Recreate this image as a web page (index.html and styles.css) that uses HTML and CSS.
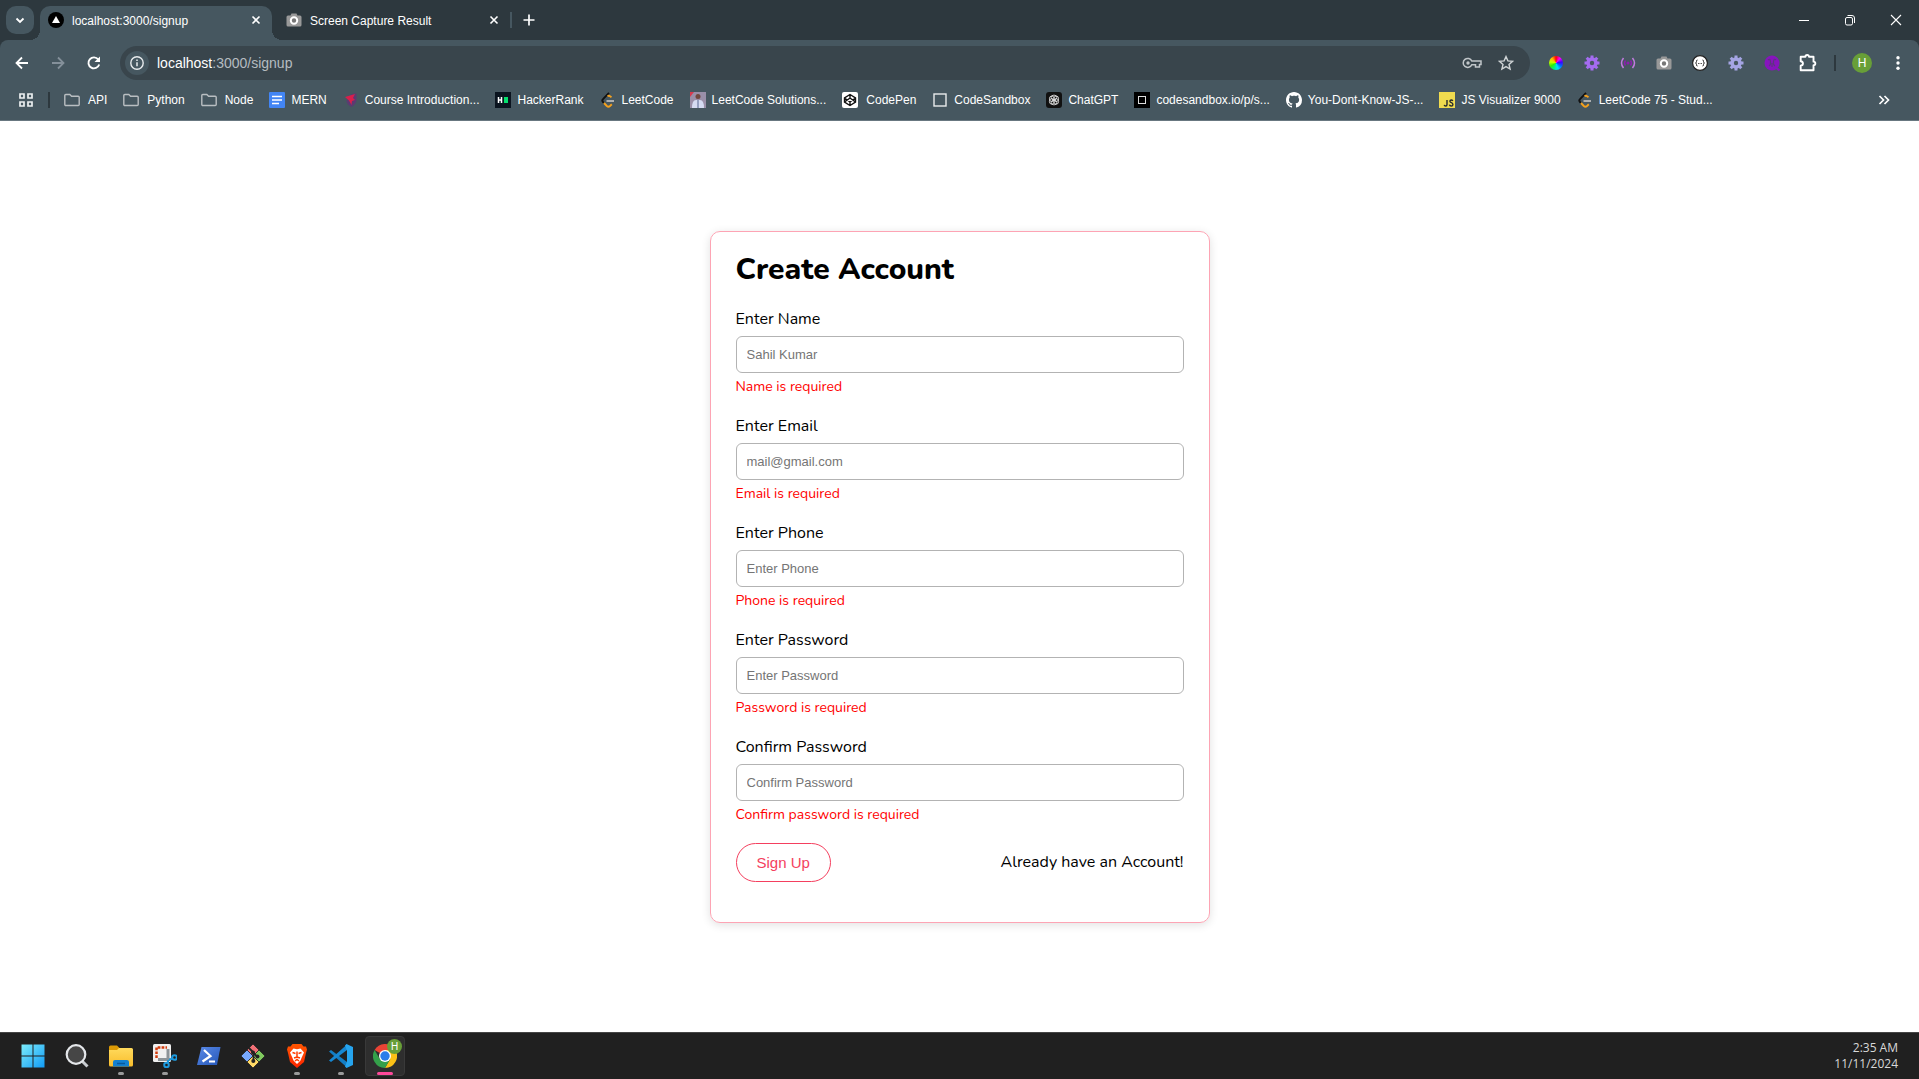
FILE: index.html
```html
<!DOCTYPE html>
<html lang="en">
<head>
<meta charset="utf-8">
<meta name="viewport" content="width=device-width, initial-scale=1">
<title>localhost:3000/signup</title>
<link rel="stylesheet" href="styles.css">
</head>
<body>
<svg class="defs" aria-hidden="true">
  <defs>
    <symbol id="close" viewBox="0 0 16 16"><path d="M4.500 4.500l7 7M11.500 4.500l-7 7" fill="none" stroke="#fff" stroke-width="1.600"/></symbol>
    <symbol id="folder" viewBox="0 0 16 16"><path d="M.8 3.500a1 1 0 0 1 1-1h4l1.800 1.800h6.600a1 1 0 0 1 1 1v7.200a1 1 0 0 1-1 1H1.800a1 1 0 0 1-1-1z" fill="none" stroke="#b9bec1" stroke-width="1.400"/></symbol>
    <symbol id="camera" viewBox="0 0 16 16"><path d="M2 3.500h2.500l1-2h5l1 2H14a1.500 1.500 0 0 1 1.500 1.500v8a1.500 1.500 0 0 1-1.500 1.500H2A1.500 1.500 0 0 1 .5 13V5A1.500 1.500 0 0 1 2 3.500z" fill="#999"/><circle cx="8" cy="8.500" r="3.200" fill="#777" stroke="#fff" stroke-width="2"/></symbol>
    <symbol id="gear" viewBox="0 0 16 16"><path d="M8 .5v15M.5 8h15M2.700 2.700l10.600 10.600M13.300 2.700L2.700 13.300" stroke="currentColor" stroke-width="3"/><circle cx="8" cy="8" r="4.200" fill="none" stroke="currentColor" stroke-width="3"/><circle cx="8" cy="8" r="2.200" fill="#465760"/></symbol>
    <symbol id="leetcode" viewBox="0 0 16 16"><path d="M9 .8L3 7.200a2 2 0 0 0 0 2.800l1 1" fill="none" stroke="#111" stroke-width="1.900"/><path d="M11.500 5.200L10 4.200a2 2 0 0 0-2.400.2M4 11l2.800 3a2.400 2.400 0 0 0 3.200 0l1.800-1.700" fill="none" stroke="#f5a11d" stroke-width="1.900"/><path d="M6.500 9h7.500" stroke="#b9b9b9" stroke-width="1.800"/></symbol>
    <linearGradient id="win" x1="0" y1="0" x2="1" y2="1"><stop offset="0" stop-color="#7cecfb"/><stop offset="1" stop-color="#119bf5"/></linearGradient>
    <linearGradient id="yellow" x1="0" y1="0" x2="0" y2="1"><stop offset="0" stop-color="#ffda5c"/><stop offset="1" stop-color="#f9bd2c"/></linearGradient>
    <linearGradient id="brave" x1="0" y1="0" x2="0" y2="1"><stop offset="0" stop-color="#ff5500"/><stop offset="1" stop-color="#ff2500"/></linearGradient>
    <linearGradient id="shell" x1="0" y1="0" x2="1" y2="1"><stop offset="0" stop-color="#5a8ae8"/><stop offset="1" stop-color="#2456b8"/></linearGradient>
  </defs>
</svg>

<header class="browser">
  <div class="tabstrip">
    <button class="tab-search" aria-label="Search tabs"><svg class="icon" viewBox="0 0 16 16"><path d="M4.500 6.500L8 10l3.500-3.500" fill="none" stroke="#fff" stroke-width="1.800"/></svg></button>
    <div class="tab tab-active">
      <svg class="icon" viewBox="0 0 16 16"><circle cx="8" cy="8" r="8" fill="#000"/><path d="M8 4l4 7H4z" fill="#fff"/></svg>
      <span class="tab-title">localhost:3000/signup</span>
      <button class="tab-close" aria-label="Close tab"><svg class="icon"><use href="#close"/></svg></button>
    </div>
    <div class="tab">
      <svg class="icon"><use href="#camera"/></svg>
      <span class="tab-title">Screen Capture Result</span>
      <button class="tab-close" aria-label="Close tab"><svg class="icon"><use href="#close"/></svg></button>
    </div>
    <span class="tab-divider"></span>
    <button class="new-tab" aria-label="New tab"><svg class="icon" viewBox="0 0 16 16"><path d="M8 2.500v11M2.500 8h11" stroke="#fff" stroke-width="1.700"/></svg></button>
    <div class="window-controls">
      <button aria-label="Minimize"><svg class="icon" viewBox="0 0 16 16"><path d="M3 8.500h10" stroke="#fff"/></svg></button>
      <button aria-label="Restore"><svg class="icon" viewBox="0 0 16 16"><rect x="3.500" y="5.500" width="7" height="7.500" rx="1.500" fill="none" stroke="#fff"/><path d="M5.500 3.500H10a2.500 2.500 0 0 1 2.500 2.500v5" fill="none" stroke="#fff"/></svg></button>
      <button aria-label="Close"><svg class="icon" viewBox="0 0 16 16"><path d="M3 3l10 10M13 3L3 13" stroke="#fff" stroke-width="1.100"/></svg></button>
    </div>
  </div>

  <div class="toolbar">
    <button class="tool" aria-label="Back"><svg class="icon" viewBox="0 0 16 16"><path d="M14 8H3M8 2.500L2.500 8 8 13.500" fill="none" stroke="#fff" stroke-width="1.800"/></svg></button>
    <button class="tool" aria-label="Forward" disabled><svg class="icon" viewBox="0 0 16 16"><path d="M2 8h11M8 2.500L13.500 8 8 13.500" fill="none" stroke="#84909a" stroke-width="1.800"/></svg></button>
    <button class="tool" aria-label="Reload"><svg class="icon" viewBox="0 0 16 16"><path d="M13.200 9.500A5.500 5.500 0 1 1 12.300 4.500" fill="none" stroke="#fff" stroke-width="1.900"/><path d="M14 1.500V7H8.500z" fill="#fff"/></svg></button>
    <div class="omnibox">
      <button class="site-info" aria-label="Site information"><svg class="icon" viewBox="0 0 16 16"><circle cx="8" cy="8" r="6.200" fill="none" stroke="#e8ebed" stroke-width="1.400"/><path d="M8 7.200v4M8 4.600v1.500" stroke="#e8ebed" stroke-width="1.500"/></svg></button>
      <span class="url">localhost<span class="url-rest">:3000/signup</span></span>
      <svg class="icon key" viewBox="0 0 20 16"><path d="M9.800 6H19v3.500h-1.500V12h-4V9.800H9.800A4.500 4.500 0 1 1 9.800 6z" fill="none" stroke="#c1c6c9" stroke-width="1.500"/><circle cx="6" cy="8" r="1.700" fill="#c1c6c9"/></svg>
      <svg class="icon" viewBox="0 0 16 16"><path d="M8 1.600l1.900 4.300 4.700.4-3.600 3.100 1.100 4.600L8 11.600 3.900 14 5 9.400 1.400 6.300l4.700-.4z" fill="none" stroke="#d0d4d6" stroke-width="1.400"/></svg>
    </div>
    <div class="extensions">
      <button class="tool" aria-label="Color picker"><span class="wheel"></span></button>
      <button class="tool gear-violet" aria-label="Settings extension"><svg class="icon"><use href="#gear"/></svg></button>
      <button class="tool" aria-label="Broadcast extension"><svg class="icon" viewBox="0 0 16 16"><g fill="none" stroke="#c27be0" stroke-width="1.500"><path d="M3.500 3Q-.5 8 3.500 13M12.500 3q4 5 0 10"/><path d="M5.500 5.500Q3.500 8 5.500 10.500M10.500 5.500q2 2.500 0 5" stroke="#8b1fae"/></g><circle cx="8" cy="8" r="1.500" fill="#8b1fae"/></svg></button>
      <button class="tool" aria-label="Screen capture"><svg class="icon"><use href="#camera"/></svg></button>
      <button class="tool" aria-label="JSON viewer"><svg class="icon" viewBox="0 0 16 16"><circle cx="8" cy="8" r="7.400" fill="#fff" stroke="#222" stroke-width="1.200"/><path d="M5.500 5Q4.300 5 4.500 6.500L3.800 8l.7 1.500q-.2 1.500 1 1.500M10.500 5q1.200 0 1 1.500l.7 1.500-.7 1.500q.2 1.500-1 1.500" fill="none" stroke="#222"/><path d="M6 8.500h4" stroke="#555" stroke-dasharray="1 .5"/></svg></button>
      <button class="tool gear-lilac" aria-label="Options extension"><svg class="icon"><use href="#gear"/></svg></button>
      <button class="tool" aria-label="Search extension"><svg class="icon" viewBox="0 0 16 16"><circle cx="8" cy="8" r="7.500" fill="#8714bd"/><path d="M11 12l4.500 3.500" stroke="#8714bd" stroke-width="2"/><path d="M4 5q2-2 2.500 1.500T5 11M12 5q-2-2-2.500 1.500T11 11M8 8v4" fill="none" stroke="#5d3580" stroke-width="1.200"/></svg></button>
      <button class="tool" aria-label="Extensions"><svg class="icon puzzle" viewBox="0 0 16 16"><path d="M1.500 2.500h4.200a1.600 1.600 0 0 1 3.200 0h4v4.300a1.600 1.600 0 0 1 0 3.200v4.500H1.500v-4q2-.3 2-2t-2-2z" fill="none" stroke="#fff" stroke-width="1.700" stroke-linejoin="round"/></svg></button>
    </div>
    <span class="tool-divider"></span>
    <button class="avatar" aria-label="Profile">H</button>
    <button class="tool" aria-label="Menu"><svg class="icon" viewBox="0 0 16 16"><g fill="#fff"><circle cx="8" cy="2.700" r="1.700"/><circle cx="8" cy="8" r="1.700"/><circle cx="8" cy="13.300" r="1.700"/></g></svg></button>
  </div>

  <nav class="bookmarks" aria-label="Bookmarks">
    <button class="apps" aria-label="Apps"><svg class="icon" viewBox="0 0 16 16"><path d="M2 2h4v4H2zM10 2h4v4h-4zM2 10h4v4H2zM10 10h4v4h-4z" fill="none" stroke="#eceff0" stroke-width="1.700"/></svg></button>
    <span class="bookmark-divider"></span>
    <a class="bookmark roomy" href="#"><svg class="icon"><use href="#folder"/></svg>API</a>
    <a class="bookmark roomy" href="#"><svg class="icon"><use href="#folder"/></svg>Python</a>
    <a class="bookmark roomy" href="#"><svg class="icon"><use href="#folder"/></svg>Node</a>
    <a class="bookmark" href="#"><svg class="icon" viewBox="0 0 16 16"><rect width="16" height="16" rx="1" fill="#4285f4"/><path d="M3 4.500h10M3 8h10M3 11.500h7" stroke="#fff" stroke-width="1.700"/></svg>MERN</a>
    <a class="bookmark" href="#"><svg class="icon" viewBox="0 0 16 16"><path d="M8 2.200l5.500-.9v7Q13 12.500 8.500 15 4 12.500 3.500 9z" fill="#5c3a72"/><path d="M2 5l10-3-2 4 2 2-3 1-.5 4L6 8.500z" fill="#d81f4c"/></svg>Course Introduction...</a>
    <a class="bookmark" href="#"><svg class="icon" viewBox="0 0 16 16"><rect width="16" height="16" fill="#0b141f"/><path d="M3.500 5v6M6.500 5v6M3.500 8h3" stroke="#fff" stroke-width="1.500"/><rect x="9" y="5" width="4" height="6" fill="#05df6d"/></svg>HackerRank</a>
    <a class="bookmark" href="#"><svg class="icon"><use href="#leetcode"/></svg>LeetCode</a>
    <a class="bookmark" href="#"><svg class="icon" viewBox="0 0 16 16"><rect width="16" height="16" fill="#9a8fa8"/><path d="M0 0h4l-4 5z" fill="#d73a4e"/><path d="M2 16q0-8 4-8h4q4 0 4 8z" fill="#d5dbf2"/><circle cx="8" cy="4.500" r="2.500" fill="#70493f"/><path d="M8 8v8" stroke="#54658f"/></svg>LeetCode Solutions...</a>
    <a class="bookmark roomy" href="#"><svg class="icon" viewBox="0 0 16 16"><rect width="16" height="16" rx="2" fill="#fff"/><path d="M8 2.500l5.500 3.500v4L8 13.500 2.500 10V6zM8 2.500V6M8 10v3.500M2.500 6L8 10l5.500-4M2.500 10L8 6l5.500 4" fill="none" stroke="#111" stroke-width="1.400"/></svg>CodePen</a>
    <a class="bookmark" href="#"><svg class="icon" viewBox="0 0 16 16"><rect x="2" y="2" width="12" height="12" fill="none" stroke="#e9eced" stroke-width="1.400"/></svg>CodeSandbox</a>
    <a class="bookmark" href="#"><svg class="icon" viewBox="0 0 16 16"><rect width="16" height="16" rx="3" fill="#111"/><g fill="none" stroke="#ddd" stroke-width=".9"><ellipse cx="8" cy="5.500" rx="2.800" ry="2.400"/><ellipse cx="8" cy="10.500" rx="2.800" ry="2.400"/><ellipse cx="5.800" cy="6.800" rx="2.400" ry="2.800"/><ellipse cx="10.200" cy="6.800" rx="2.400" ry="2.800"/><ellipse cx="5.800" cy="9.400" rx="2.400" ry="2.800"/><ellipse cx="10.200" cy="9.400" rx="2.400" ry="2.800"/></g></svg>ChatGPT</a>
    <a class="bookmark" href="#"><svg class="icon" viewBox="0 0 16 16"><rect width="16" height="16" fill="#000"/><rect x="4.500" y="4.500" width="7" height="7" fill="none" stroke="#ddd" stroke-width="1"/></svg>codesandbox.io/p/s...</a>
    <a class="bookmark" href="#"><svg class="icon" viewBox="0 0 16 16"><path fill="#fff" d="M8 0C3.580 0 0 3.580 0 8c0 3.540 2.290 6.530 5.470 7.590.4.070.55-.17.55-.38 0-.19-.01-.82-.01-1.490-2.010.37-2.530-.49-2.690-.94-.09-.23-.48-.94-.82-1.130-.28-.15-.68-.52-.01-.53.63-.01 1.080.58 1.230.82.72 1.210 1.870.87 2.330.66.07-.52.28-.87.51-1.070-1.780-.2-3.640-.89-3.640-3.950 0-.87.31-1.590.82-2.150-.08-.2-.36-1.020.08-2.120 0 0 .67-.21 2.200.82.640-.18 1.320-.27 2-.27s1.360.09 2 .27c1.530-1.040 2.200-.82 2.200-.82.440 1.100.160 1.920.080 2.120.510.560.820 1.270.820 2.150 0 3.070-1.870 3.750-3.650 3.950.290.250.540.730.540 1.480 0 1.070-.01 1.930-.01 2.200 0 .210.150.460.550.380A8.010 8.010 0 0 0 16 8c0-4.420-3.580-8-8-8z"/></svg>You-Dont-Know-JS-...</a>
    <a class="bookmark" href="#"><svg class="icon" viewBox="0 0 16 16"><rect width="16" height="16" fill="#f0db4f"/><path d="M8 8v4.500q0 1.500-1.300 1.500t-1.500-1.200M13.800 9Q13.300 8 12.200 8t-1.300 1.200q0 1 1.500 1.500t1.500 1.700q0 1.600-1.600 1.600t-1.900-1.300" fill="none" stroke="#26292b" stroke-width="1.400"/></svg>JS Visualizer 9000</a>
    <a class="bookmark" href="#"><svg class="icon"><use href="#leetcode"/></svg>LeetCode 75 - Stud...</a>
    <button class="overflow" aria-label="More bookmarks"><svg class="icon" viewBox="0 0 16 16"><path d="M3.500 4l4 4-4 4M8.500 4l4 4-4 4" fill="none" stroke="#fff" stroke-width="1.700"/></svg></button>
  </nav>
</header>

<main class="page">
  <form class="card" novalidate>
    <h1 class="card-title">Create Account</h1>
    <div class="field">
      <label for="name">Enter Name</label>
      <input id="name" type="text" placeholder="Sahil Kumar">
      <p class="error">Name is required</p>
    </div>
    <div class="field">
      <label for="email">Enter Email</label>
      <input id="email" type="email" placeholder="mail@gmail.com">
      <p class="error">Email is required</p>
    </div>
    <div class="field">
      <label for="phone">Enter Phone</label>
      <input id="phone" type="tel" placeholder="Enter Phone">
      <p class="error">Phone is required</p>
    </div>
    <div class="field">
      <label for="password">Enter Password</label>
      <input id="password" type="password" placeholder="Enter Password">
      <p class="error">Password is required</p>
    </div>
    <div class="field">
      <label for="confirm">Confirm Password</label>
      <input id="confirm" type="password" placeholder="Confirm Password">
      <p class="error">Confirm password is required</p>
    </div>
    <div class="actions">
      <button class="submit" type="button">Sign Up</button>
      <a class="login-link" href="#">Already have an Account!</a>
    </div>
  </form>
</main>

<footer class="taskbar">
  <div class="tasks">
    <button class="task" aria-label="Start"><svg viewBox="0 0 24 24"><path d="M.5.5h11v11H.5zM12.500.5h11v11h-11zM.5 12.500h11v11H.5zM12.500 12.500h11v11h-11z" fill="url(#win)"/></svg></button>
    <button class="task" aria-label="Search"><svg viewBox="0 0 24 24"><path d="M17 17l5.500 5.500" stroke="#c9cdd1" stroke-width="3"/><circle cx="11" cy="10.500" r="9.300" fill="#464646" stroke="#e4e7ea" stroke-width="2.200"/></svg></button>
    <button class="task running" aria-label="File Explorer"><svg viewBox="0 0 24 24"><path d="M0 3a1.500 1.500 0 0 1 1.500-1.500H8L10.500 4v4H0z" fill="#dc9a05"/><path d="M0 6h8l2-2h12.500A1.500 1.500 0 0 1 24 5.500V21a1.500 1.500 0 0 1-1.500 1.500h-21A1.500 1.500 0 0 1 0 21z" fill="url(#yellow)"/><path d="M4 22.500V18a2 2 0 0 1 2-2h12a2 2 0 0 1 2 2v4.500z" fill="#1380d0"/><path d="M8 19.500h8" stroke="#08599c" stroke-width="1.500"/></svg></button>
    <button class="task running" aria-label="Snipping Tool"><svg viewBox="0 0 24 24"><rect x="0" y="0" width="18" height="18" rx="1.500" fill="#f0f0f0"/><path d="M3.500 14V3.500H14" fill="none" stroke="#d13b0d" stroke-width="2.500" stroke-dasharray="2.700 1.200"/><path d="M15 5v11.500M5 15.500h12" stroke="#8d9498" stroke-width="3"/><circle cx="21.500" cy="13.500" r="2.300" fill="none" stroke="#1c9be0" stroke-width="2"/><circle cx="13.500" cy="21" r="2.300" fill="none" stroke="#1c9be0" stroke-width="2"/><path d="M16 16l3-1.500M15 16v3" stroke="#1c9be0" stroke-width="2"/></svg></button>
    <button class="task" aria-label="PowerShell"><svg viewBox="0 0 24 24"><path d="M4.500 3h19L20 21H0z" fill="url(#shell)"/><path d="M7 6l6.500 6L5.500 17.500M12 17.500h6" fill="none" stroke="#fff" stroke-width="2.200"/></svg></button>
    <button class="task" aria-label="Git Bash"><svg viewBox="0 0 24 24"><g stroke="#222" stroke-width=".8"><path d="M12 0l6 6-6 6-6-6z" fill="#f27076"/><path d="M6 6l6 6-6 6-6-6z" fill="#78a9ff"/><path d="M18 6l6 6-6 6-6-6z" fill="#80c95e"/><path d="M12 12l6 6-6 6-6-6z" fill="#ffd966"/></g><path d="M8 4l4.500 4.500V17M12 8.500l4 4" fill="none" stroke="#222" stroke-width="1.800"/><circle cx="12" cy="8.500" r="2" fill="#222"/><circle cx="12.300" cy="17" r="2" fill="#222"/><circle cx="16.500" cy="12.500" r="2" fill="#222"/></svg></button>
    <button class="task running" aria-label="Brave"><svg viewBox="0 0 24 24"><path d="M7.500 0h9l2 2.500 2.500 0 1 3-1 3.500-2 9-7 6-7-6-2-9-1-3.500 1-3h2.500z" fill="url(#brave)"/><path d="M8.500 4.500L12 5.200l3.500-.7L19 8.500l-2.500 5.500-1 2.500L12 20l-3.500-3.500-1-2.500L5 8.500z" fill="#fff"/><path d="M7.500 8.500l3 1M16.500 8.500l-3 1M12 7.500v5.500M9 14l3-1 3 1M10 17l2-1.500 2 1.500" fill="none" stroke="#ff3d00" stroke-width="1.500"/></svg></button>
    <button class="task running" aria-label="Visual Studio Code"><svg viewBox="0 0 24 24"><path d="M0 7.500L2 6l16 12v5.500z" fill="#137dc4"/><path d="M0 16.500L2 18 18 6V.5z" fill="#1687d2"/><path d="M17.500 0L24 3v18l-6.500 3-1.500-1.500 2-5V6.500l-2-5z" fill="#26a4ee"/></svg></button>
    <button class="task task-active" aria-label="Google Chrome"><svg viewBox="0 0 24 24"><path d="M12 12L1.600 6A12 12 0 0 1 22.400 6z" fill="#ea4335"/><path d="M12 12V6h10.400A12 12 0 0 1 12 24l5.200-9z" fill="#fbc116"/><path d="M6.800 15L1.600 6A12 12 0 0 0 12 24l5.200-9L12 12z" fill="#34a04a"/><circle cx="12" cy="12" r="6" fill="#fff"/><circle cx="12" cy="12" r="4.700" fill="#2b7de9"/></svg><span class="task-badge">H</span></button>
  </div>
  <time class="clock" datetime="2024-11-11T02:35">2:35 AM<br>11/11/2024</time>
</footer>
</body>
</html>
```
FILE: styles.css
```css
* { box-sizing: border-box; }

body {
  margin: 0;
  min-height: 100vh;
  display: flex;
  flex-direction: column;
  background: #fff;
  font-family: "Liberation Sans", Arial, sans-serif;
  font-size: 12px;
}

button {
  margin: 0;
  padding: 0;
  border: 0;
  background: none;
  color: inherit;
  font: inherit;
  display: grid;
  place-items: center;
}

a { color: inherit; text-decoration: none; }

.defs { position: absolute; width: 0; height: 0; }
.icon { width: 16px; height: 16px; flex: none; }

/* Browser chrome */
.browser { background: #2d383e; color: #fff; }

.tabstrip {
  display: flex;
  align-items: center;
  height: 40px;
  padding-left: 6px;
}
.tab-search {
  width: 28px;
  height: 28px;
  border-radius: 10px;
  background: #465760;
}
.tab {
  display: flex;
  align-items: center;
  gap: 8px;
  width: 232px;
  height: 28px;
  padding: 0 8px;
}
.tab-active {
  position: relative;
  align-self: flex-end;
  height: 34px;
  margin: 0 6px;
  padding-bottom: 6px;
  border-radius: 10px 10px 0 0;
  background: #465760;
}
.tab-active::before,
.tab-active::after {
  content: "";
  position: absolute;
  bottom: 0;
  width: 10px;
  height: 10px;
}
.tab-active::before { right: 100%; background: radial-gradient(circle at 0 0, transparent 10px, #465760 10px); }
.tab-active::after { left: 100%; background: radial-gradient(circle at 100% 0, transparent 10px, #465760 10px); }
.tab-title { flex: 1; padding-top: 2px; white-space: nowrap; }
.tab-divider { width: 2px; height: 16px; background: #465760; }
.new-tab { width: 34px; height: 28px; }
.window-controls { display: flex; margin-left: auto; }
.window-controls button { width: 46px; height: 40px; }

.toolbar {
  display: flex;
  align-items: center;
  height: 46px;
  padding: 0 3px 0 4px;
  border-radius: 8px 8px 0 0;
  background: #465760;
}
.tool { width: 36px; height: 34px; }
.omnibox {
  flex: 1;
  display: flex;
  align-items: center;
  gap: 16px;
  height: 34px;
  margin: 0 8px;
  padding: 0 16px 0 5px;
  border-radius: 17px;
  background: #39454c;
}
.site-info {
  width: 24px;
  height: 24px;
  border-radius: 50%;
  background: #465760;
}
.url { flex: 1; margin-left: -8px; font-size: 14px; }
.url-rest { color: #b5bcc0; }
.key { width: 20px; }
.extensions { display: flex; }
.wheel {
  width: 14px;
  height: 14px;
  border-radius: 50%;
  background: conic-gradient(red, #f0f, #40f, #06f, #0df, #0e8, #3e0, #cf0, #fb0, red);
}
.gear-violet { color: #a46cf0; }
.gear-lilac { color: #a5a5e4; }
.puzzle { width: 18px; height: 18px; }
.tool-divider { width: 2px; height: 16px; margin: 0 16px 0 8px; background: #2d383e; }
.avatar {
  width: 20px;
  height: 20px;
  margin-right: 8px;
  border-radius: 50%;
  background: #689f38;
}

.bookmarks {
  display: flex;
  align-items: center;
  gap: 16px;
  height: 35px;
  padding: 0 27px 6px 18px;
  border-bottom: 1px solid #687780;
  background: #465760;
  white-space: nowrap;
}
.bookmark-divider { width: 2px; height: 16px; margin: 0 -2px; background: #2d383e; }
.bookmark { display: flex; align-items: center; gap: 6px; }
.roomy { gap: 8px; }
.overflow { margin-left: auto; }

/* Sign-up page */
.page {
  flex: 1;
  display: grid;
  place-items: center;
  padding: 24px;
}
.card {
  width: 100%;
  max-width: 500px;
  padding: 16px 25px 40px;
  border: 1px solid #fda4b4;
  border-radius: 10px;
  box-shadow: 0 2px 10px rgba(0, 0, 0, 0.12);
  color: #000;
  font-family: Nunito, Roboto, sans-serif;
  font-size: 16px;
}
.card-title {
  margin: 0 0 16px;
  font-family: Nunito, Lato, sans-serif;
  font-size: 30px;
  font-weight: 800;
  line-height: 44px;
}
.field { margin-bottom: 19px; }
.field label { display: block; line-height: 22px; }
.field input {
  display: block;
  width: 100%;
  height: 37px;
  margin: 6px 0 4px;
  padding: 0 10px;
  border: 1px solid #b3b3b3;
  border-radius: 6px;
  font-family: "Liberation Sans", Arial, sans-serif;
  font-size: 13px;
}
.field input::placeholder { color: #757575; }
.error { margin: 0; color: #f00; font-size: 14px; line-height: 19px; }
.actions { display: flex; align-items: center; justify-content: space-between; }
.submit {
  height: 39px;
  padding: 0 20px;
  border: 1px solid #f43f5e;
  border-radius: 20px;
  color: #f43f5e;
  font-family: "Liberation Sans", Arial, sans-serif;
  font-size: 15px;
}

/* Taskbar */
.taskbar {
  display: flex;
  align-items: center;
  justify-content: space-between;
  height: 47px;
  padding: 0 21px 0 13px;
  border-top: 1px solid #454545;
  background: #202020;
}
.tasks { display: flex; gap: 4px; }
.task { position: relative; width: 40px; height: 40px; border-radius: 4px; }
.task svg { width: 24px; height: 24px; }
.task-active { background: #2e2e2e; border: 1px solid #393939; }
.running::after,
.task-active::after {
  content: "";
  position: absolute;
  bottom: 1px;
  left: 50%;
  width: 6px;
  height: 3px;
  margin-left: -3px;
  border-radius: 2px;
  background: #9a9a9a;
}
.task-active::after { width: 16px; margin-left: -8px; bottom: 0; background: #ff4a9b; }
.task-badge {
  position: absolute;
  top: 2px;
  right: 2px;
  width: 15px;
  height: 15px;
  border-radius: 50%;
  background: #689f38;
  color: #fff;
  font-size: 10px;
  line-height: 15px;
  text-align: center;
}
.clock {
  color: #d8d8d8;
  font-family: "Open Sans", sans-serif;
  font-size: 12px;
  line-height: 16px;
  text-align: right;
}
```
